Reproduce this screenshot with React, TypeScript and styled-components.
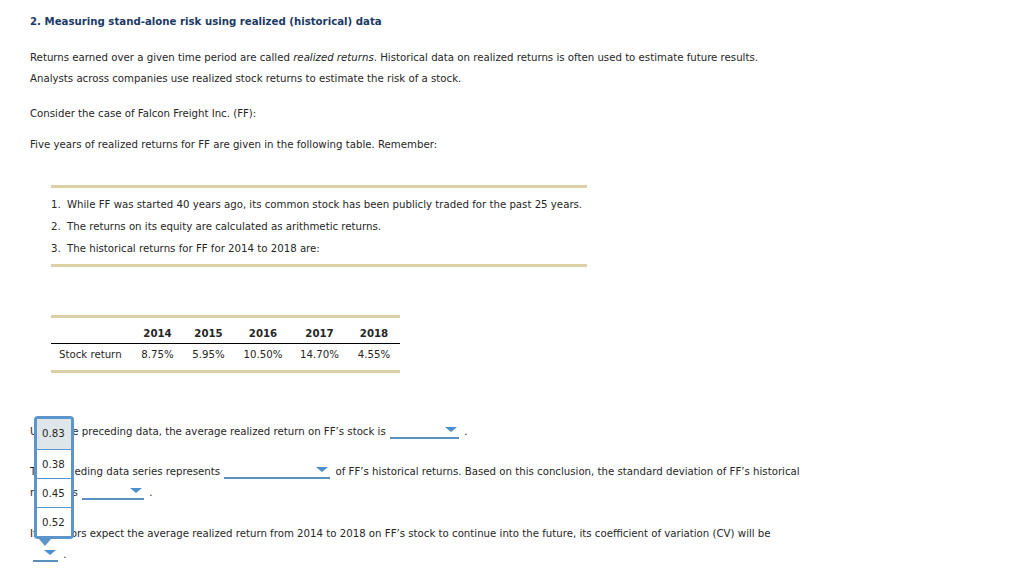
import React from 'react';
import styled, { createGlobalStyle } from 'styled-components';

const GlobalStyle = createGlobalStyle`
  html, body {
    margin: 0;
    padding: 0;
    background: #fff;
  }
  body {
    font-family: "DejaVu Sans", Verdana, sans-serif;
    font-size: 10.2px;
    color: #262626;
  }
`;

const Page = styled.div`
  padding: 12px 0 40px 30px;
  width: 994px;
  box-sizing: border-box;
`;

const Title = styled.h2`
  margin: 0;
  font-size: 10.2px;
  line-height: 20px;
  font-weight: bold;
  color: #1b3a66;
`;

const Para = styled.p<{ $top: number }>`
  margin: ${p => p.$top}px 0 0;
  line-height: 21px;
`;

const NoteBox = styled.div`
  margin: 30px 0 0 21px;
  width: 536px;
  border-top: 3px solid #dbd1a6;
  border-bottom: 3px solid #dbd1a6;
  padding: 6px 0 4px;
`;

const NoteItem = styled.div`
  display: flex;
  line-height: 22px;
  white-space: nowrap;
`;

const NoteNum = styled.span`
  width: 16px;
  flex: none;
`;

const ReturnTable = styled.div`
  margin: 48px 0 0 21px;
  width: 349px;
  border-top: 3px solid #dbd1a6;
  border-bottom: 3px solid #dbd1a6;
`;

const TableRow = styled.div<{ $head?: boolean }>`
  display: grid;
  grid-template-columns: 82px 49px 53px 56px 57px 52px;
  line-height: 14px;
  padding: ${p => (p.$head ? '9px 0 2px' : '4px 0 8px')};
  border-bottom: ${p => (p.$head ? '1px solid #000' : 'none')};
  font-weight: ${p => (p.$head ? 'bold' : 'normal')};
`;

const LabelCell = styled.span`
  padding-left: 8px;
  white-space: nowrap;
`;

const NumCell = styled.span`
  text-align: center;
  white-space: nowrap;
`;

const Question = styled.p<{ $top: number }>`
  margin: ${p => p.$top}px 0 0;
  line-height: 21px;
  width: 800px;
`;

const Dropdown = styled.span<{ $w: number; $left?: number }>`
  display: inline-block;
  position: relative;
  width: ${p => p.$w}px;
  height: 12px;
  margin: 0 2px 0 ${p => p.$left ?? 1}px;
  border-bottom: 2px solid #5b8fbf;
  vertical-align: -4px;
`;

const Arrow = styled.span`
  position: absolute;
  right: 2px;
  bottom: 5px;
  width: 0;
  height: 0;
  border-left: 6.5px solid transparent;
  border-right: 6.5px solid transparent;
  border-top: 5px solid #4b8fcd;
`;

const Popup = styled.div`
  position: absolute;
  left: 1px;
  bottom: 21px;
  width: 34px;
  background: #fff;
  border: 3px solid #5b95c9;
  border-radius: 4px;
  z-index: 5;
  line-height: 14px;
`;

const PopupItem = styled.div<{ $active?: boolean }>`
  height: 29px;
  box-sizing: border-box;
  padding: 8px 0 0 5px;
  background: ${p => (p.$active ? '#dfe6ea' : '#fff')};
  border-top: 1px solid #5b95c9;
  &:first-child {
    border-top: none;
    height: 30px;
  }
`;

const Pointer = styled.span`
  position: absolute;
  top: calc(100% + 3px);
  left: 2px;
  width: 0;
  height: 0;
  border-left: 6.5px solid transparent;
  border-right: 6.5px solid transparent;
  border-top: 7px solid #5b95c9;
`;

const years = ['2014', '2015', '2016', '2017', '2018'];
const returns = ['8.75%', '5.95%', '10.50%', '14.70%', '4.55%'];
const cvOptions = ['0.83', '0.38', '0.45', '0.52'];

function Select({ width, left, open }: { width: number; left?: number; open?: boolean }) {
  return (
    <Dropdown $w={width} $left={left}>
      <Arrow />
      {open && (
        <Popup>
          {cvOptions.map((o, i) => (
            <PopupItem key={o} $active={i === 0}>
              {o}
            </PopupItem>
          ))}
          <Pointer />
        </Popup>
      )}
    </Dropdown>
  );
}

export default function App() {
  return (
    <Page>
      <GlobalStyle />
      <Title>2. Measuring stand-alone risk using realized (historical) data</Title>
      <Para $top={15}>
        Returns earned over a given time period are called <i>realized returns</i>. Historical data on
        realized returns is often used to estimate future results.
        <br />
        Analysts across companies use realized stock returns to estimate the risk of a stock.
      </Para>
      <Para $top={14}>Consider the case of Falcon Freight Inc. (FF):</Para>
      <Para $top={10}>Five years of realized returns for FF are given in the following table. Remember:</Para>

      <NoteBox>
        <NoteItem>
          <NoteNum>1.</NoteNum>
          While FF was started 40 years ago, its common stock has been publicly traded for the past 25 years.
        </NoteItem>
        <NoteItem>
          <NoteNum>2.</NoteNum>
          The returns on its equity are calculated as arithmetic returns.
        </NoteItem>
        <NoteItem>
          <NoteNum>3.</NoteNum>
          The historical returns for FF for 2014 to 2018 are:
        </NoteItem>
      </NoteBox>

      <ReturnTable>
        <TableRow $head>
          <LabelCell />
          {years.map(y => (
            <NumCell key={y}>{y}</NumCell>
          ))}
        </TableRow>
        <TableRow>
          <LabelCell>Stock return</LabelCell>
          {returns.map(r => (
            <NumCell key={r}>{r}</NumCell>
          ))}
        </TableRow>
      </ReturnTable>

      <Question $top={48}>
        Using the preceding data, the average realized return on FF’s stock is <Select width={69} /> .
      </Question>
      <Question $top={19}>
        The preceding data series represents <Select width={106} /> of FF’s historical returns. Based on
        this conclusion, the standard deviation of FF’s historical returns is <Select width={62} /> .
      </Question>
      <Question $top={20}>
        If investors expect the average realized return from 2014 to 2018 on FF’s stock to continue into
        the future, its coefficient of variation (CV) will be
        <br />
        <Select width={25} left={3} open /> .
      </Question>
    </Page>
  );
}
